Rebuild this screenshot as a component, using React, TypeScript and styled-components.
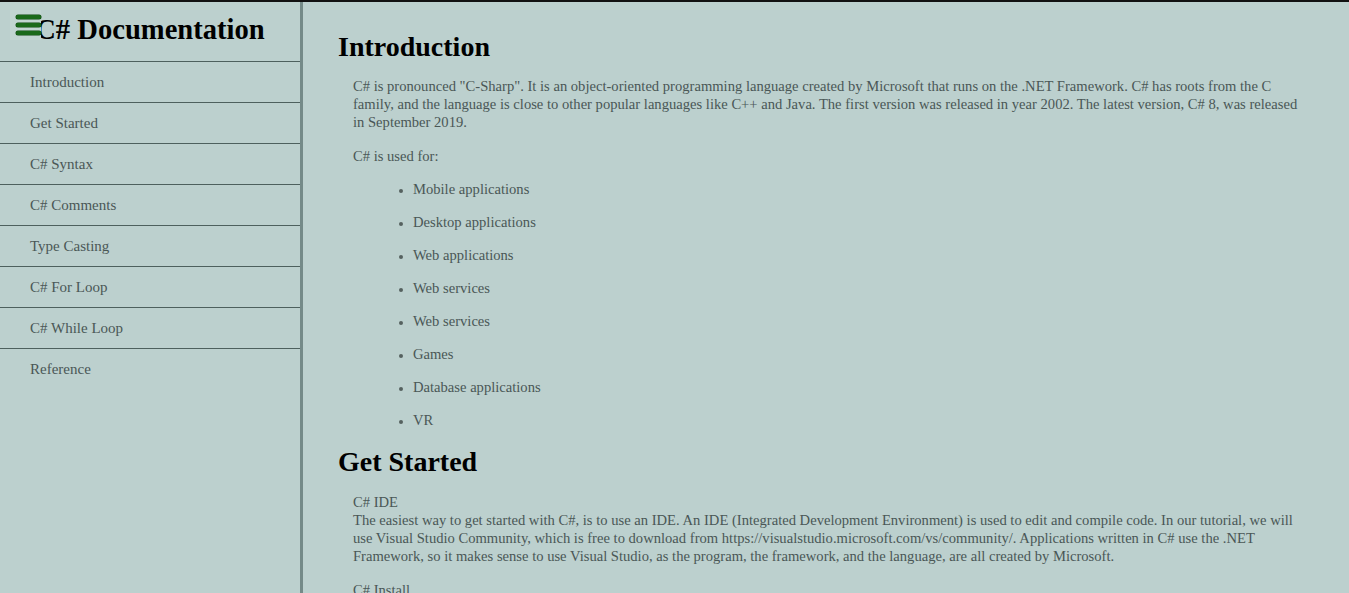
import React from "react";
import styled, { createGlobalStyle } from "styled-components";

const Global = createGlobalStyle`
  html, body { margin: 0; padding: 0; }
  body {
    background: #bcd0ce;
    font-family: "Liberation Serif", "Times New Roman", serif;
    color: #4a5756;
    overflow: hidden;
  }
`;

const Page = styled.div`
  display: flex;
  border-top: 2px solid #111;
  height: 591px;
  overflow: hidden;
`;

const Sidebar = styled.nav`
  position: relative;
  flex: 0 0 300px;
  border-right: 3px solid #748a88;
  display: flex;
  flex-direction: column;
`;

const SideHeader = styled.header`
  height: 59px;
  display: flex;
  align-items: center;
  justify-content: center;
`;

const Title = styled.h1`
  margin: 0;
  font-size: 28.6px;
  line-height: 32px;
  font-weight: bold;
  color: #000;
  padding-bottom: 4px;
`;

const Burger = styled.button`
  position: absolute;
  left: 10px;
  top: 8px;
  width: 31px;
  height: 30px;
  padding: 0;
  border: none;
  background: #c2d5d2;
  display: flex;
  flex-direction: column;
  align-items: flex-end;
  justify-content: center;
  gap: 4px;
`;

const Bar = styled.span`
  display: block;
  width: 25px;
  height: 4px;
  border-radius: 2px;
  background: #1b6a1b;
  box-shadow: 0 0 0 0.5px #0f4a10;
`;

const NavLink = styled.a`
  display: flex;
  align-items: center;
  height: 40px;
  padding-left: 30px;
  border-top: 1px solid #4d605e;
  font-size: 15px;
  color: #4a5756;
  text-decoration: none;
`;

const Main = styled.main`
  flex: 1;
  padding: 29px 44px 0 35px;
`;

const Section = styled.section`
  & + & { padding-top: 2px; }
`;

const Heading = styled.h2<{ $gap?: number }>`
  margin: 0 0 ${(p) => p.$gap ?? 14}px;
  font-size: 28px;
  line-height: 32px;
  font-weight: bold;
  color: #000;
`;

const Body = styled.div`
  padding-left: 15px;
  font-size: 14.6px;
  line-height: 18px;
`;

const Para = styled.p`
  margin: 0 0 16px;
`;

const List = styled.ul`
  margin: -1px 0 0;
  padding-left: 60px;
`;

const Item = styled.li`
  margin-bottom: 15px;
  &::marker { color: #55615f; font-size: 12px; }
`;

const navItems = [
  "Introduction",
  "Get Started",
  "C# Syntax",
  "C# Comments",
  "Type Casting",
  "C# For Loop",
  "C# While Loop",
  "Reference",
];

const uses = [
  "Mobile applications",
  "Desktop applications",
  "Web applications",
  "Web services",
  "Web services",
  "Games",
  "Database applications",
  "VR",
];

export default function App() {
  return (
    <>
      <Global />
      <Page>
        <Sidebar>
          <Burger aria-label="menu">
            <Bar />
            <Bar />
            <Bar />
          </Burger>
          <SideHeader>
            <Title>C# Documentation</Title>
          </SideHeader>
          {navItems.map((n) => (
            <NavLink key={n} href="#">
              {n}
            </NavLink>
          ))}
        </Sidebar>
        <Main>
          <Section>
            <Heading>Introduction</Heading>
            <Body>
              <Para>
                C# is pronounced "C-Sharp". It is an object-oriented programming language created by
                Microsoft that runs on the .NET Framework. C# has roots from the C family, and the
                language is close to other popular languages like C++ and Java. The first version was
                released in year 2002. The latest version, C# 8, was released in September 2019.
              </Para>
              <Para>C# is used for:</Para>
              <List>
                {uses.map((u, i) => (
                  <Item key={i}>{u}</Item>
                ))}
              </List>
            </Body>
          </Section>
          <Section>
            <Heading $gap={15}>Get Started</Heading>
            <Body>
              <Para>
                C# IDE
                <br />
                The easiest way to get started with C#, is to use an IDE. An IDE (Integrated
                Development Environment) is used to edit and compile code. In our tutorial, we will use
                Visual Studio Community, which is free to download from
                https://visualstudio.microsoft.com/vs/community/. Applications written in C# use the
                .NET Framework, so it makes sense to use Visual Studio, as the program, the framework,
                and the language, are all created by Microsoft.
              </Para>
              <Para>C# Install</Para>
            </Body>
          </Section>
        </Main>
      </Page>
    </>
  );
}
